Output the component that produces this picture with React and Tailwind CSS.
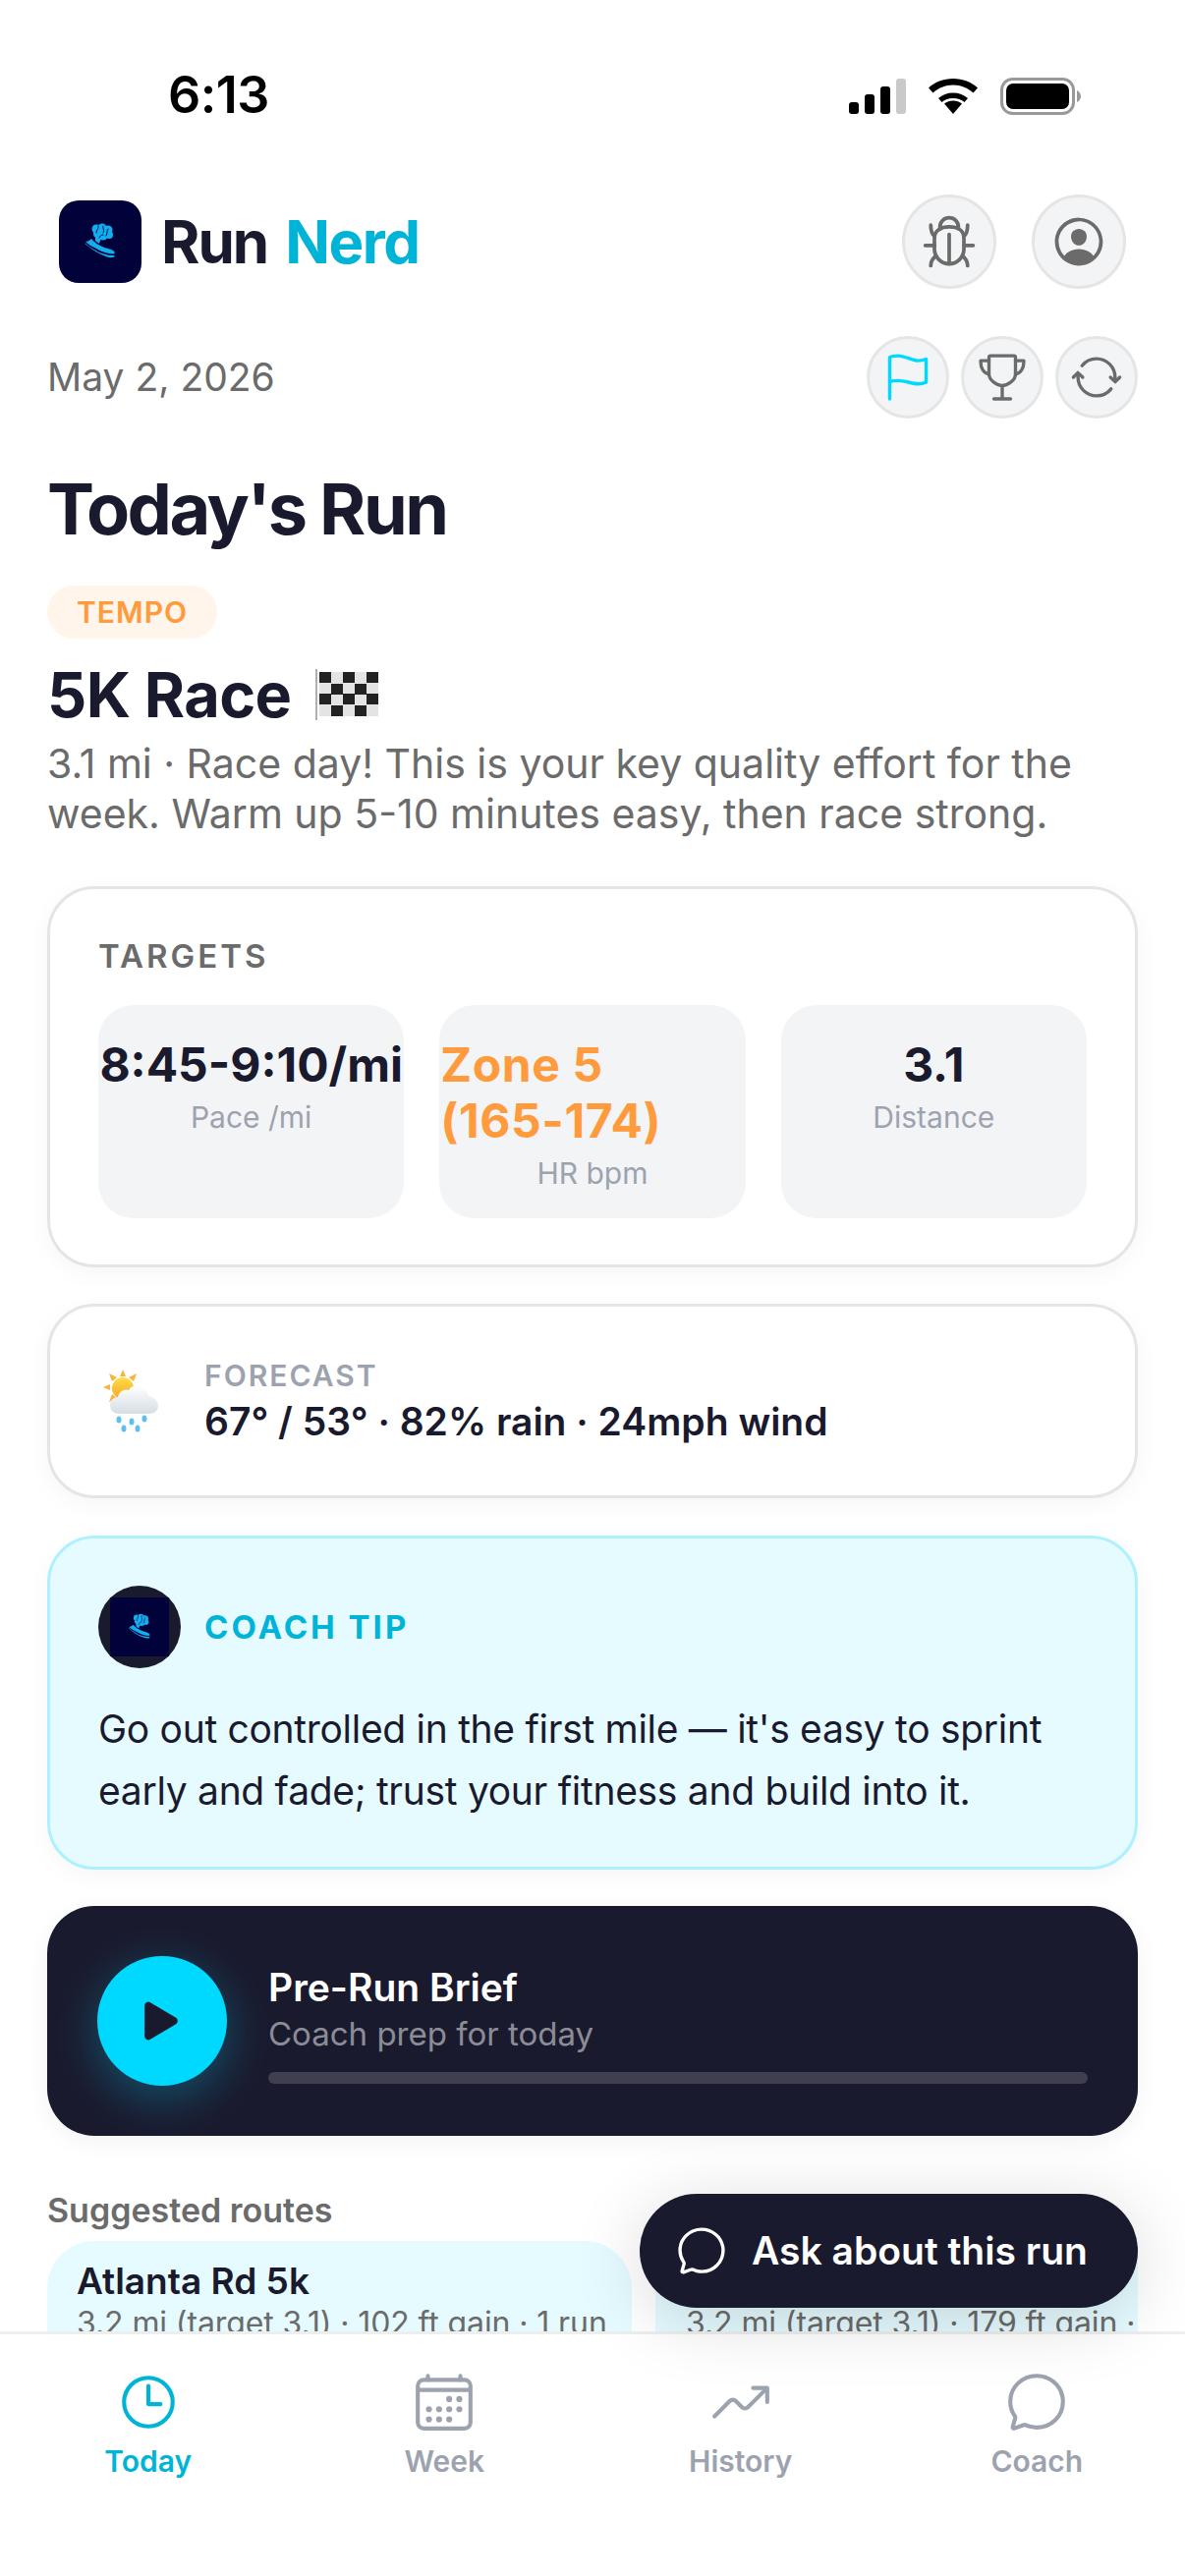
import React from 'react';
import {
  IoBugOutline, IoPersonCircleOutline, IoFlagOutline, IoTrophyOutline, IoSyncOutline,
  IoTimeOutline, IoCalendarOutline, IoTrendingUpOutline, IoChatbubbleOutline, IoPlay,
} from 'react-icons/io5';

function LogoTile({ className }) {
  return (
    <svg viewBox="0 0 84 84" className={className}>
      <rect width="84" height="84" fill="#02023a" />
      <g fill="#12aef0">
        <circle cx="38" cy="29" r="4.5" />
        <circle cx="44" cy="28" r="4.5" />
        <circle cx="50" cy="30" r="4.5" />
        <circle cx="51" cy="35" r="4" />
        <circle cx="45" cy="36" r="4.5" />
        <circle cx="39" cy="34" r="4" />
        <circle cx="44" cy="32" r="6" />
        <path d="M37 36 L43 38 L41 44 L37 41 Z" />
        <path d="M33 39 C35 42 40 45 44 47 C48 49 52 49 55 51 C57 52 57 54 56 54.500 C50 54.500 44 52.500 38 49 C34 47 30 45 27 42 C29 42 31 41 33 39 Z" />
        <path d="M26.500 44 C32 49 41 55 49 57.500 C52 58.500 55 58.500 57 57 L56 56 C49 56 42 54 36 50 C32 48 29 46 27 43.500 Z" />
      </g>
      <g fill="none" stroke="#02023a" strokeWidth="0.9" strokeLinecap="round">
        <path d="M40 26 C41 29 38 30 38 33" />
        <path d="M45 26 C44 29 47 30 45 33" />
        <path d="M50 29 C48 31 50 33 48 36" />
        <path d="M41 38 C42 36 43 35 45 35" />
      </g>
    </svg>
  );
}

function StatusBar() {
  return (
    <div className="h-[198px] shrink-0 relative">
      <div className="flex justify-between items-start pt-[70px] pl-[171px] pr-[106px]">
        <span className="text-[52px] leading-[54px] font-semibold text-black tracking-[-0.5px]">6:13</span>
        <div className="flex items-center gap-[23px] pt-[9px]">
          <svg viewBox="0 0 58 36" className="w-[58px] h-[36px]">
            <rect x="0" y="24" width="10" height="12" rx="3" fill="#000" />
            <rect x="16" y="16" width="10" height="20" rx="3" fill="#000" />
            <rect x="32" y="8" width="10" height="28" rx="3" fill="#000" />
            <rect x="48" y="0" width="10" height="36" rx="3" fill="#c9c9c9" />
          </svg>
          <svg viewBox="0 0 50 36" className="w-[50px] h-[36px]">
            <path d="M25 36 L16 25.500 C21 21.500 29 21.500 34 25.500 Z" fill="#000" />
            <path d="M25 14.500 C31 14.500 36 16.500 40 20 L36.500 24 C33.500 21.500 29.500 20 25 20 C20.500 20 16.500 21.500 13.500 24 L10 20 C14 16.500 19 14.500 25 14.500 Z" fill="#000" />
            <path d="M25 0 C35 0 43.500 3.500 50 9.500 L45.500 14.500 C40 9.500 33 6.500 25 6.500 C17 6.500 10 9.500 4.500 14.500 L0 9.500 C6.500 3.500 15 0 25 0 Z" fill="#000" />
          </svg>
          <svg viewBox="0 0 82 38" className="w-[82px] h-[38px]">
            <rect x="1.500" y="1.500" width="73" height="35" rx="11" fill="none" stroke="#999" strokeWidth="3" />
            <rect x="6" y="6" width="64" height="26" rx="7" fill="#000" />
            <path d="M78 13 C80.500 14 82 16.500 82 19 C82 21.500 80.500 24 78 25 Z" fill="#999" />
          </svg>
        </div>
      </div>
    </div>
  );
}

function RoundBtn({ big, children }) {
  return (
    <div className={`${big ? 'w-[96px] h-[96px]' : 'w-[84px] h-[84px]'} rounded-full bg-[#f3f4f6] border-[3px] border-[#e5e5e5] flex items-center justify-center`}>
      {children}
    </div>
  );
}

function Stat({ value, label, orange, wrap }) {
  return (
    <div className="flex-1 h-[217px] rounded-[36px] bg-[#f3f4f6] pt-[32px] flex flex-col items-center">
      <div className={`w-full text-[48px] leading-[57px] font-bold ${orange ? 'text-[#ff9a3d]' : 'text-[#1a1a2e]'} ${wrap ? 'text-left pl-[1px] tracking-[0.6px]' : 'text-center whitespace-nowrap'}`}>
        {value}
      </div>
      <div className="text-[30px] leading-[50px] text-[#9ca3af]">{label}</div>
    </div>
  );
}

function CheckerFlag() {
  const cells = [];
  for (let r = 0; r < 4; r++) {
    for (let c = 0; c < 5; c++) {
      if ((r + c) % 2 === 0) cells.push(<rect key={`${r}-${c}`} x={4 + c * 12} y={3 + r * 11 + (c % 2)} width="12" height="11" fill="#222222" />);
    }
  }
  return (
    <svg viewBox="0 0 64 52" className="w-[64px] h-[52px]">
      <rect x="0" y="0" width="2" height="52" fill="#b0b0b0" />
      <rect x="4" y="3" width="60" height="45" fill="#e4e4e4" />
      {cells}
    </svg>
  );
}

function RainCloud() {
  return (
    <svg viewBox="0 0 60 64" className="w-[60px] h-[64px]">
      <defs>
        <linearGradient id="cl" x1="0" y1="0" x2="0" y2="1">
          <stop offset="0" stopColor="#ffffff" />
          <stop offset="1" stopColor="#d5dde4" />
        </linearGradient>
        <linearGradient id="sn" x1="0" y1="0" x2="0" y2="1">
          <stop offset="0" stopColor="#fddc4b" />
          <stop offset="1" stopColor="#f7a823" />
        </linearGradient>
      </defs>
      <g fill="#f9b43a">
        <path d="M20 0 L23 7 L17 7 Z" />
        <path d="M6 4 L14 8 L9 12 Z" />
        <path d="M34 4 L31 12 L26 8 Z" />
        <path d="M0 18 L7 15 L7 21 Z" />
        <path d="M6 33 L9 25 L14 29 Z" />
      </g>
      <circle cx="20" cy="19" r="11" fill="url(#sn)" />
      <path d="M17 45 C9 45 7 40 7 36 C7 31 11 28 15 28 C16 22 22 19 26 21 C29 15 38 15 42 20 C46 24 46 26 46 27 C52 28 56 32 56 37 C56 42 52 45 47 45 Z" fill="url(#cl)" />
      <g fill="#5cc0f2">
        <ellipse cx="16" cy="51" rx="2.500" ry="3.500" />
        <ellipse cx="29" cy="53" rx="2.500" ry="3.500" />
        <ellipse cx="42" cy="50" rx="2.500" ry="3.500" />
        <ellipse cx="21" cy="60" rx="2.500" ry="3.500" />
        <ellipse cx="35" cy="60" rx="2.500" ry="3.500" />
      </g>
    </svg>
  );
}

function Tab({ icon, label, active }) {
  return (
    <div className={`flex-1 flex flex-col items-center ${active ? 'text-[#00b4d8]' : 'text-[#9ca3af]'}`}>
      {icon}
      <span className="mt-[6px] text-[30px] leading-[42px] font-semibold">{label}</span>
    </div>
  );
}

export default function App() {
  return (
    <div className="relative w-[1206px] h-[2622px] flex flex-col overflow-hidden bg-white text-[#1a1a2e] font-['Inter',sans-serif]">
      <StatusBar />

      <div className="flex-1 min-h-0 overflow-hidden px-[48px]">
        {/* Header */}
        <div className="flex items-center justify-between">
          <div className="flex items-center gap-[20px] pl-[12px]">
            <LogoTile className="w-[84px] h-[84px] rounded-[20px]" />
            <div className="text-[60px] leading-[72px] font-bold tracking-[-2px]">
              Run <span className="text-[#00b4d8] ml-[6px] tracking-[-1.5px]">Nerd</span>
            </div>
          </div>
          <div className="flex gap-[36px] pr-[12px]">
            <RoundBtn big><IoBugOutline className="w-[60px] h-[60px] text-[#6b6b6b]" /></RoundBtn>
            <RoundBtn big><IoPersonCircleOutline className="w-[60px] h-[60px] text-[#6b6b6b]" /></RoundBtn>
          </div>
        </div>

        <div className="mt-[48px] flex items-center justify-between">
          <div className="text-[39px] leading-[50px] text-[#6b6b6b]">May 2, 2026</div>
          <div className="flex gap-[12px]">
            <RoundBtn><IoFlagOutline className="w-[54px] h-[54px] text-[#00d9ff]" /></RoundBtn>
            <RoundBtn><IoTrophyOutline className="w-[54px] h-[54px] text-[#6b6b6b]" /></RoundBtn>
            <RoundBtn><IoSyncOutline className="w-[54px] h-[54px] text-[#6b6b6b]" /></RoundBtn>
          </div>
        </div>

        <h1 className="mt-[50px] text-[72px] leading-[84px] font-bold tracking-[-2.5px]">Today's Run</h1>

        <div className="mt-[36px] inline-block h-[54px] px-[30px] rounded-full bg-[#fff5eb] text-[30px] leading-[54px] font-semibold tracking-[1px] text-[#ff9a3d]">
          TEMPO
        </div>

        <div className="mt-[21px] flex items-center gap-[24px]">
          <span className="text-[63px] leading-[72px] font-bold tracking-[-0.6px]">5K Race</span>
          <CheckerFlag />
        </div>

        <p className="mt-[9px] text-[41px] leading-[51px] text-[#6b6b6b]">
          3.1 mi · Race day! This is your key quality effort for the week. Warm up 5-10 minutes easy, then race strong.
        </p>

        {/* Targets */}
        <div className="mt-[48px] h-[388px] rounded-[48px] border-[3px] border-[#e5e5e5] bg-white px-[49px] pt-[48px] shadow-[0_6px_24px_rgba(0,0,0,0.04)]">
          <div className="text-[33px] leading-[40px] font-semibold tracking-[3px] text-[#6b6b6b]">TARGETS</div>
          <div className="mt-[30px] flex gap-[36px]">
            <Stat value="8:45-9:10/mi" label="Pace /mi" />
            <Stat value={<>Zone 5<br />(165-174)</>} label="HR bpm" orange wrap />
            <Stat value="3.1" label="Distance" />
          </div>
        </div>

        {/* Forecast */}
        <div className="mt-[37px] h-[198px] rounded-[48px] border-[3px] border-[#e5e5e5] bg-white pl-[54px] flex items-center gap-[43px] shadow-[0_6px_24px_rgba(0,0,0,0.04)]">
          <RainCloud />
          <div className="pt-[2px]">
            <div className="text-[30px] leading-[36px] font-semibold tracking-[2px] text-[#9ca3af]">FORECAST</div>
            <div className="mt-[4px] text-[39px] leading-[50px] font-semibold">67° / 53° · 82% rain · 24mph wind</div>
          </div>
        </div>

        {/* Coach tip */}
        <div className="mt-[38px] h-[340px] rounded-[48px] border-[3px] border-[#aef0ff] bg-[#e5fbff] pt-[48px] px-[49px] shadow-[0_6px_24px_rgba(0,0,0,0.04)]">
          <div className="flex items-center gap-[24px]">
            <div className="w-[84px] h-[84px] rounded-full bg-[#1a1a2e] flex items-center justify-center overflow-hidden">
              <LogoTile className="w-[60px] h-[60px]" />
            </div>
            <div className="text-[33px] leading-[40px] font-bold tracking-[3px] text-[#00b4d8]">COACH TIP</div>
          </div>
          <p className="mt-[30px] text-[39px] leading-[63px] tracking-[-0.3px]">
            Go out controlled in the first mile — it's easy to sprint early and fade; trust your fitness and build into it.
          </p>
        </div>

        {/* Pre-run brief */}
        <div className="mt-[37px] h-[234px] rounded-[48px] bg-[#1a1a2e] pl-[51px] pr-[51px] flex items-center gap-[42px] shadow-[0_6px_24px_rgba(0,0,0,0.05)]">
          <div className="w-[132px] h-[132px] shrink-0 rounded-full bg-[#00d9ff] flex items-center justify-center shadow-[0_12px_48px_rgba(0,217,255,0.3)]">
            <IoPlay className="w-[54px] h-[54px] text-[#1a1a2e] ml-[-3px]" />
          </div>
          <div className="flex-1 pt-[4px]">
            <div className="text-[39px] leading-[50px] font-semibold text-white">Pre-Run Brief</div>
            <div className="text-[33px] leading-[44px] text-white/50">Coach prep for today</div>
            <div className="mt-[17px] h-[12px] rounded-[6px] bg-[#3f3f50]" />
          </div>
        </div>

        {/* Routes */}
        <div className="mt-[53px] text-[34px] leading-[46px] font-semibold text-[#6b6b6b]">Suggested routes</div>
        <div className="mt-[8px] flex gap-[24px] overflow-hidden">
          <div className="w-[595px] shrink-0 h-[200px] rounded-[48px] bg-[#e5fbff] pt-[15px] px-[30px]">
            <div className="text-[37px] leading-[52px] font-semibold">Atlanta Rd 5k</div>
            <div className="mt-[-3px] text-[32px] leading-[40px] tracking-[-0.1px] text-[#6b6b6b] whitespace-nowrap">3.2 mi (target 3.1) · 102 ft gain · 1 run</div>
          </div>
          <div className="w-[595px] shrink-0 h-[200px] rounded-[48px] bg-[#e5fbff] pt-[15px] px-[31px]">
            <div className="text-[37px] leading-[52px] font-semibold">Route</div>
            <div className="mt-[-3px] text-[32px] leading-[40px] tracking-[-0.1px] text-[#6b6b6b] whitespace-nowrap">3.2 mi (target 3.1) · 179 ft gain · 1 run</div>
          </div>
        </div>
      </div>

      {/* Tab bar */}
      <div className="h-[249px] shrink-0 border-t-[3px] border-[#eeeeee] bg-white pt-[36px] flex items-start">
        <Tab active label="Today" icon={<IoTimeOutline className="w-[66px] h-[66px]" />} />
        <Tab label="Week" icon={<IoCalendarOutline className="w-[66px] h-[66px]" />} />
        <Tab label="History" icon={<IoTrendingUpOutline className="w-[66px] h-[66px]" />} />
        <Tab label="Coach" icon={<IoChatbubbleOutline className="w-[66px] h-[66px]" />} />
      </div>

      {/* Floating ask button */}
      <div className="absolute left-[651px] top-[2233px] w-[507px] h-[116px] rounded-full bg-[#1a1a2e] flex items-center pl-[36px] gap-[24px] shadow-[0_12px_72px_rgba(0,0,0,0.15)]">
        <IoChatbubbleOutline className="w-[54px] h-[54px] text-white" />
        <span className="text-[39px] leading-[50px] font-semibold text-white whitespace-nowrap">Ask about this run</span>
      </div>
    </div>
  );
}
